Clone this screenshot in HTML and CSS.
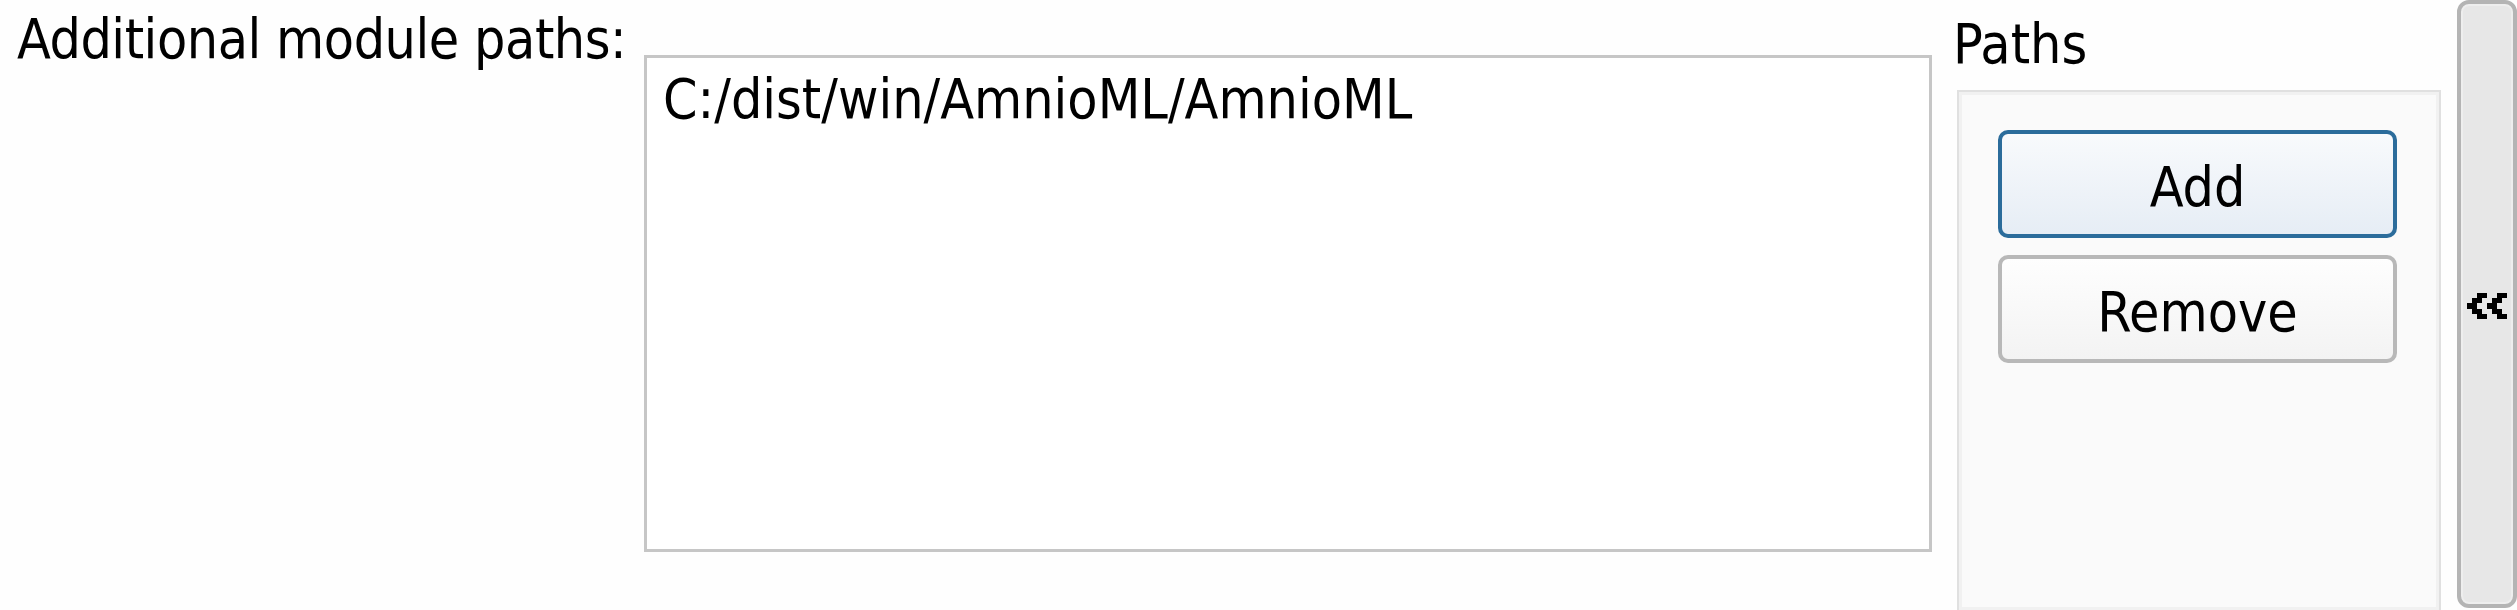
FILE: index.html
```html
<!DOCTYPE html>
<html>
<head>
<meta charset="utf-8">
<link rel="stylesheet" href="styles.css">
</head>
<body>
<div class="page">
  <div class="label">Additional module paths:</div>
  <div class="list">
    <div class="item">C:/dist/win/AmnioML/AmnioML</div>
  </div>
  <div class="side">
    <div class="side-title">Paths</div>
    <div class="group">
      <button class="btn btn-default">Add</button>
      <button class="btn">Remove</button>
    </div>
  </div>
  <div class="collapse">
    <svg class="chev" width="40" height="26" viewBox="0 0 40 26" shape-rendering="crispEdges">
      <g fill="#000">
        <rect x="10" y="0" width="10" height="5"/>
        <rect x="5" y="5" width="10" height="5"/>
        <rect x="0" y="10" width="10" height="6"/>
        <rect x="5" y="16" width="10" height="5"/>
        <rect x="10" y="21" width="10" height="5"/>
        <rect x="30" y="0" width="10" height="5"/>
        <rect x="25" y="5" width="10" height="5"/>
        <rect x="20" y="10" width="10" height="6"/>
        <rect x="25" y="16" width="10" height="5"/>
        <rect x="30" y="21" width="10" height="5"/>
      </g>
    </svg>
  </div>
</div>
</body>
</html>
```

FILE: styles.css
```css
html, body {
  margin: 0;
  padding: 0;
  background: #fefefe;
  overflow: hidden;
}
.page {
  display: flex;
  align-items: flex-start;
  height: 610px;
  font-family: "DejaVu Sans Condensed", "DejaVu Sans", sans-serif;
  font-stretch: condensed;
  font-size: 55px;
  color: #000;
}
.label {
  flex: 0 0 644px;
  box-sizing: border-box;
  padding-left: 17px;
  margin-top: 7px;
  line-height: 64px;
  letter-spacing: -0.45px;
  white-space: nowrap;
}
.list {
  flex: 0 0 1288px;
  box-sizing: border-box;
  margin-top: 55px;
  height: 497px;
  border: 3px solid #c6c6c6;
  background: #ffffff;
  padding: 9px 16px;
}
.item {
  line-height: 64px;
  white-space: nowrap;
}
.side {
  flex: 0 0 488px;
  margin-left: 21px;
  display: flex;
  flex-direction: column;
}
.side-title {
  margin-top: 12px;
  line-height: 64px;
}
.group {
  margin-top: 14px;
  margin-left: 4px;
  box-sizing: border-box;
  height: 522px;
  border: 2px solid #e0e0e0;
  box-shadow: inset 0 0 0 3px #f1f1f1;
  background: #fafafa;
  padding: 38px 42px 0 39px;
  display: flex;
  flex-direction: column;
  gap: 17px;
}
.btn {
  display: block;
  width: 100%;
  height: 108px;
  box-sizing: border-box;
  border: 4px solid #b8b8b8;
  border-radius: 10px;
  background: linear-gradient(#fefefe, #f3f3f3);
  font: inherit;
  font-stretch: condensed;
  color: #000;
  padding: 5px 0 0 0;
  margin: 0;
}
.btn-default {
  border-color: #2b6c9b;
  background: linear-gradient(#f8fafc, #e6edf5);
}
.collapse {
  flex: 0 0 60px;
  margin-left: 16px;
  box-sizing: border-box;
  height: 608px;
  border: 4px solid #b4b4b4;
  border-radius: 12px;
  background: #e7e7e7;
  box-shadow: inset 0 0 0 2px #eeeeee;
  display: flex;
  align-items: center;
  justify-content: center;
}
.chev {
  display: block;
  margin-top: 3px;
}
```
